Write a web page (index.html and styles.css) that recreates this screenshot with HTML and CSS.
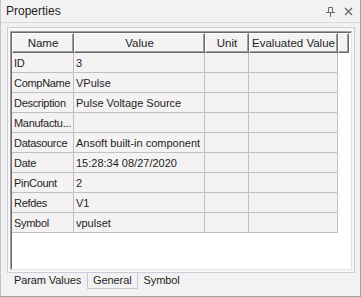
FILE: index.html
```html
<!DOCTYPE html>
<html lang="en">
<head>
  <meta charset="UTF-8">
  <title>Properties</title>
  <link rel="stylesheet" href="styles.css">
</head>
<body>
  <div class="window">
    <!-- Title bar -->
    <header class="titlebar">
      <span class="title">Properties</span>
      <span class="title-buttons">
        <svg class="pin" width="9" height="10" viewBox="0 0 9 10">
          <path d="M2.5 0.5h4v5h-4z M0 5.5h9 M4.5 5.5v4.5" fill="none" stroke="#6a6a6a" stroke-width="1"/>
        </svg>
        <svg class="close" width="9" height="9" viewBox="0 0 9 9">
          <path d="M1 1l7 7M8 1l-7 7" stroke="#6a6a6a" stroke-width="1.4"/>
        </svg>
      </span>
    </header>

    <!-- Property grid -->
    <section class="panel">
      <div class="grid">
        <table class="props">
          <colgroup>
            <col class="col-name">
            <col class="col-value">
            <col class="col-unit">
            <col class="col-eval">
            <col class="col-extra">
          </colgroup>
          <thead>
            <tr>
              <th>Name</th>
              <th>Value</th>
              <th>Unit</th>
              <th>Evaluated Value</th>
              <th></th>
            </tr>
          </thead>
          <tbody>
            <tr><td>ID</td><td>3</td><td></td><td></td><td class="blank"></td></tr>
            <tr><td>CompName</td><td>VPulse</td><td></td><td></td><td class="blank"></td></tr>
            <tr><td>Description</td><td>Pulse Voltage Source</td><td></td><td></td><td class="blank"></td></tr>
            <tr><td>Manufactu...</td><td></td><td></td><td></td><td class="blank"></td></tr>
            <tr><td>Datasource</td><td>Ansoft built-in component</td><td></td><td></td><td class="blank"></td></tr>
            <tr><td>Date</td><td>15:28:34 08/27/2020</td><td></td><td></td><td class="blank"></td></tr>
            <tr><td>PinCount</td><td>2</td><td></td><td></td><td class="blank"></td></tr>
            <tr><td>Refdes</td><td>V1</td><td></td><td></td><td class="blank"></td></tr>
            <tr><td>Symbol</td><td>vpulset</td><td></td><td></td><td class="blank"></td></tr>
          </tbody>
        </table>
      </div>
    </section>

    <!-- Tabs -->
    <nav class="tabs">
      <span class="tab">Param Values</span>
      <span class="tab active">General</span>
      <span class="tab">Symbol</span>
    </nav>
  </div>
</body>
</html>
```

FILE: styles.css
```css
body {
  margin: 0;
  padding: 0;
  background-color: #f2f2f2;
  font-family: "Liberation Sans", Arial, sans-serif;
  color: #1e1e1e;
}

.window {
  width: 361px;
  height: 297px;
  box-sizing: border-box;
  background-color: #f3f2f2;
  border-left: 1px solid #c4c4c4;
  border-right: 1px solid #a0a0a0;
  border-bottom: 1px solid #a0a0a0;
  display: flex;
  flex-direction: column;
}

.titlebar {
  height: 22px;
  border-bottom: 1px solid #dadada;
  display: flex;
  align-items: center;
  justify-content: space-between;
  padding: 0 7px 0 5px;
}

.title {
  font-size: 12px;
  color: #1e1e1e;
}

.title-buttons {
  display: flex;
  align-items: center;
  gap: 9px;
}

.pin {
  margin-top: 1px;
}

.panel {
  margin: 4px 5px 0 6px;
  height: 246px;
  box-sizing: border-box;
  border: 1px solid #cbcbdb;
  padding: 3px 2px 2px 2px;
  background-color: #f7f7f7;
}

.grid {
  height: 100%;
  box-sizing: border-box;
  background: white;
  border-left: 1px solid #a0a0a0;
  border-top: 1px solid #a0a0a0;
  border-right: 1px solid #e3e3e3;
  border-bottom: 1px solid #e3e3e3;
  box-shadow: inset 1px 1px 0 #696969;
  padding: 1px 0 0 1px;
}

.props {
  width: 337px;
  border-collapse: separate;
  border-spacing: 0;
  table-layout: fixed;
  font-size: 11px;
}

.col-name { width: 62px; }
.col-value { width: 131px; }
.col-unit { width: 44px; }
.col-eval { width: 89px; }
.col-extra { width: 11px; }

.props th {
  height: 20px;
  box-sizing: border-box;
  padding: 0;
  font-weight: normal;
  font-size: 11.5px;
  text-align: center;
  background-color: #f4f3f3;
  border-top: 1px solid #ffffff;
  border-left: 1px solid #ffffff;
  border-right: 1px solid #696969;
  border-bottom: 1px solid #696969;
  box-shadow: inset -1px -1px 0 #a0a0a0;
  white-space: nowrap;
  overflow: hidden;
}

.props td {
  height: 20px;
  box-sizing: border-box;
  padding: 0 0 0 2px;
  background-color: #f4f2f3;
  border-right: 1px solid #c0c0c0;
  border-bottom: 1px solid #c0c0c0;
  white-space: nowrap;
  overflow: hidden;
}

.props td:first-child {
  letter-spacing: -0.3px;
}

.props td.blank {
  background: transparent;
  border: none;
}

.tabs {
  display: flex;
  height: 16px;
  padding-left: 7px;
  font-size: 11px;
  letter-spacing: -0.1px;
}

.tab {
  padding: 0 5px;
  line-height: 15px;
  border: 1px solid transparent;
  border-top: none;
}

.tab.active {
  border-color: #c8c8d8;
}
```
